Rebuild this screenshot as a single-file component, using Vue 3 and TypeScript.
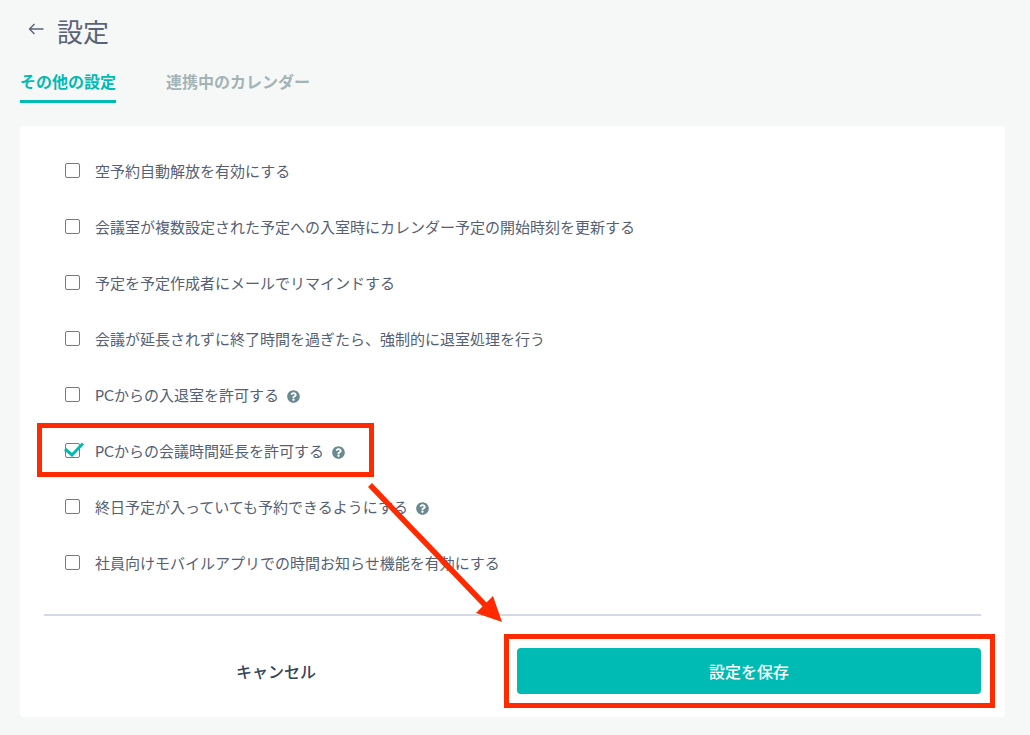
<script setup lang="ts">
import { ref } from 'vue'

interface Option {
  label: string
  checked: boolean
  help?: boolean
}

const options = ref<Option[]>([
  { label: '空予約自動解放を有効にする', checked: false },
  { label: '会議室が複数設定された予定への入室時にカレンダー予定の開始時刻を更新する', checked: false },
  { label: '予定を予定作成者にメールでリマインドする', checked: false },
  { label: '会議が延長されずに終了時間を過ぎたら、強制的に退室処理を行う', checked: false },
  { label: 'PCからの入退室を許可する', checked: false, help: true },
  { label: 'PCからの会議時間延長を許可する', checked: true, help: true },
  { label: '終日予定が入っていても予約できるようにする', checked: false, help: true },
  { label: '社員向けモバイルアプリでの時間お知らせ機能を有効にする', checked: false }
])

const tabs = ['その他の設定', '連携中のカレンダー']
const activeTab = ref(0)

const helpPath = 'M504 256c0 136.997-111.043 248-248 248S8 392.997 8 256C8 119.083 119.043 8 256 8s248 111.083 248 248zM262.655 90c-54.497 0-89.255 22.957-116.549 63.758-3.536 5.286-2.353 12.415 2.715 16.258l34.699 26.31c5.205 3.947 12.621 3.008 16.665-2.122 17.864-22.658 30.113-35.797 57.303-35.797 20.429 0 45.698 13.148 45.698 32.958 0 14.976-12.363 22.667-32.534 33.976C247.128 238.528 216 254.941 216 296v4c0 6.627 5.373 12 12 12h56c6.627 0 12-5.373 12-12v-1.333c0-28.462 83.186-29.647 83.186-106.667 0-58.002-60.165-102-116.531-102zM256 338c-25.365 0-46 20.635-46 46 0 25.364 20.635 46 46 46s46-20.636 46-46c0-25.365-20.635-46-46-46z'
</script>

<template>
  <div class="page">
    <header class="title-row">
      <svg class="back" width="16" height="12" viewBox="0 0 16 12" fill="none">
        <path d="M15.5 6H1.5M6.5 1L1.5 6L6.5 11" stroke="#5a6478" stroke-width="1.4" />
      </svg>
      <h1>設定</h1>
    </header>

    <nav class="tabs">
      <button
        v-for="(tab, i) in tabs"
        :key="tab"
        class="tab"
        :class="{ active: activeTab === i }"
        @click="activeTab = i"
      >
        {{ tab }}
      </button>
    </nav>

    <section class="card">
      <label v-for="opt in options" :key="opt.label" class="row">
        <span class="box" :class="{ checked: opt.checked }">
          <svg v-if="opt.checked" class="tick" width="22" height="17" viewBox="0 0 22 17" fill="none">
            <path d="M2 8L9 14L20 2.5" stroke="#00bbb4" stroke-width="3" />
          </svg>
        </span>
        <input v-model="opt.checked" type="checkbox" class="native" />
        <span class="label">{{ opt.label }}</span>
        <svg v-if="opt.help" class="help" width="13" height="13" viewBox="0 0 512 512">
          <path :d="helpPath" fill="#688a90" />
        </svg>
      </label>

      <hr class="divider" />

      <footer class="actions">
        <button class="cancel">キャンセル</button>
        <button class="save">設定を保存</button>
      </footer>
    </section>

    <svg class="notes" width="1030" height="735" viewBox="0 0 1030 735" fill="none">
      <rect x="39.5" y="425.5" width="332" height="49" stroke="#ff2a00" stroke-width="5" />
      <rect x="506.5" y="636.5" width="486" height="69" stroke="#ff2a00" stroke-width="5" />
      <path d="M370 485L486 606" stroke="#ff2a00" stroke-width="5.5" />
      <path d="M502 622L476 613L493 596Z" fill="#ff2a00" />
    </svg>
  </div>
</template>

<style scoped>
.page {
  position: relative;
  box-sizing: border-box;
  height: 735px;
  padding: 0 25px 18px 20px;
  background-color: #f6f8f8;
  font-family: Lato, "Noto Sans CJK JP", sans-serif;
  overflow: hidden;
}

.title-row {
  display: flex;
  align-items: center;
  height: 60px;
  margin-bottom: 2px;
  padding-left: 8px;
}

.back {
  margin-right: 13px;
  margin-top: -2px;
}

.title-row h1 {
  margin: 0;
  font-size: 26px;
  font-weight: 400;
  color: #5a6478;
}

.tabs {
  display: flex;
  gap: 50px;
  height: 41px;
}

.tab {
  height: 41px;
  padding: 0;
  border: none;
  border-bottom: 3px solid transparent;
  background: none;
  font-family: inherit;
  font-size: 16px;
  font-weight: 700;
  color: #a3b3b6;
  cursor: pointer;
}

.tab.active {
  color: #00bbb4;
  border-bottom-color: #00bbb4;
}

.card {
  margin-top: 23px;
  padding: 16px 24px 23px;
  background-color: #fff;
  border-radius: 4px;
}

.row {
  display: flex;
  align-items: center;
  height: 56px;
  padding-left: 21px;
  cursor: pointer;
}

.native {
  display: none;
}

.box {
  position: relative;
  box-sizing: border-box;
  width: 15px;
  height: 15px;
  margin-right: 15px;
  border: 1px solid #6b7f86;
  border-radius: 2px;
  flex-shrink: 0;
}

.tick {
  position: absolute;
  left: -3px;
  top: -3px;
}

.label {
  font-size: 15px;
  color: #566074;
}

.help {
  margin-left: 8px;
  margin-top: 4px;
}

.divider {
  height: 2px;
  margin: 24px 0 32px;
  border: none;
  background-color: #d5d8e6;
}

.actions {
  display: grid;
  grid-template-columns: 464px 464px;
  gap: 9px;
}

.cancel,
.save {
  height: 46px;
  border: none;
  border-radius: 4px;
  font-family: inherit;
  font-size: 16px;
  font-weight: 500;
  cursor: pointer;
}

.cancel {
  background: none;
  color: #33445a;
}

.save {
  background-color: #00bbb4;
  color: #fff;
}

.notes {
  position: absolute;
  left: 0;
  top: 0;
  pointer-events: none;
}
</style>
